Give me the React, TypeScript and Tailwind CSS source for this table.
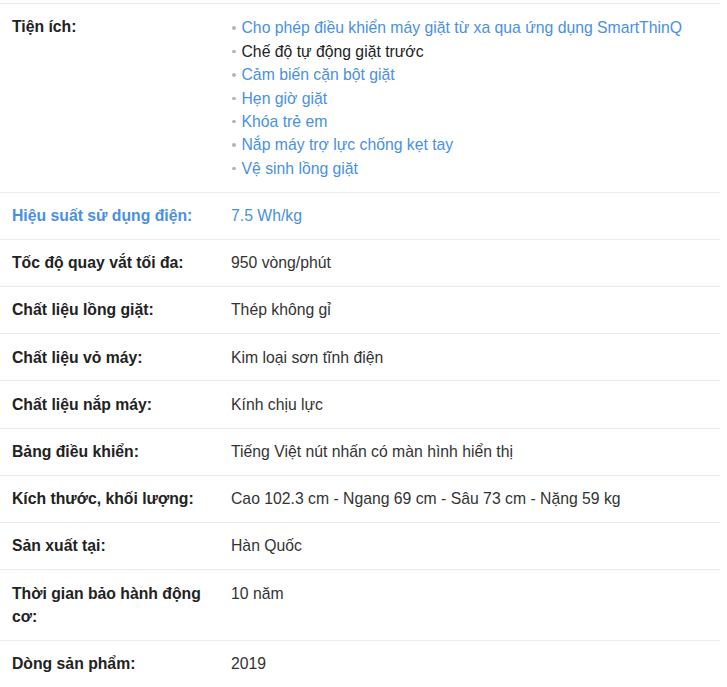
const FEATURES: { text: string; link: boolean }[] = [
  { text: "Cho phép điều khiển máy giặt từ xa qua ứng dụng SmartThinQ", link: true },
  { text: "Chế độ tự động giặt trước", link: false },
  { text: "Cảm biến cặn bột giặt", link: true },
  { text: "Hẹn giờ giặt", link: true },
  { text: "Khóa trẻ em", link: true },
  { text: "Nắp máy trợ lực chống kẹt tay", link: true },
  { text: "Vệ sinh lồng giặt", link: true },
];

const SPECS: { label: string; value: string; link?: boolean }[] = [
  { label: "Hiệu suất sử dụng điện:", value: "7.5 Wh/kg", link: true },
  { label: "Tốc độ quay vắt tối đa:", value: "950 vòng/phút" },
  { label: "Chất liệu lồng giặt:", value: "Thép không gỉ" },
  { label: "Chất liệu vỏ máy:", value: "Kim loại sơn tĩnh điện" },
  { label: "Chất liệu nắp máy:", value: "Kính chịu lực" },
  { label: "Bảng điều khiển:", value: "Tiếng Việt nút nhấn có màn hình hiển thị" },
  { label: "Kích thước, khối lượng:", value: "Cao 102.3 cm - Ngang 69 cm - Sâu 73 cm - Nặng 59 kg" },
  { label: "Sản xuất tại:", value: "Hàn Quốc" },
  { label: "Thời gian bảo hành động cơ:", value: "10 năm" },
  { label: "Dòng sản phẩm:", value: "2019" },
];

function Row({ label, link, children }: { label: string; link?: boolean; children: React.ReactNode }) {
  return (
    <div className="flex border-t border-[#ebebeb] py-[11.4px]">
      <div
        className={
          "w-[231px] shrink-0 pl-3 pr-3 font-bold " +
          (link ? "text-[#4a90e2]" : "text-[#222]")
        }
      >
        {label}
      </div>
      <div className="flex-1 pr-3">{children}</div>
    </div>
  );
}

export default function App() {
  return (
    <div
      className="bg-white pt-[3px] text-[15.75px] leading-[23.4px] text-[#333]"
      style={{ fontFamily: '"Liberation Sans", Arial, sans-serif' }}
    >
      <div className="w-[720px] border-b border-[#ebebeb]">
        <Row label="Tiện ích:">
          <ul className="mt-[1px]">
            {FEATURES.map((f) => (
              <li key={f.text} className="flex items-center">
                <span className="mr-[6px] ml-[1px] h-[3.5px] w-[3.5px] shrink-0 rounded-full bg-[#b5b5b5]" />
                <span className={f.link ? "text-[#4a90e2]" : "text-[#222]"}>{f.text}</span>
              </li>
            ))}
          </ul>
        </Row>
        {SPECS.map((s) => (
          <Row key={s.label} label={s.label} link={s.link}>
            <span className={s.link ? "text-[#4a90e2]" : "text-[#333]"}>{s.value}</span>
          </Row>
        ))}
      </div>
    </div>
  );
}
